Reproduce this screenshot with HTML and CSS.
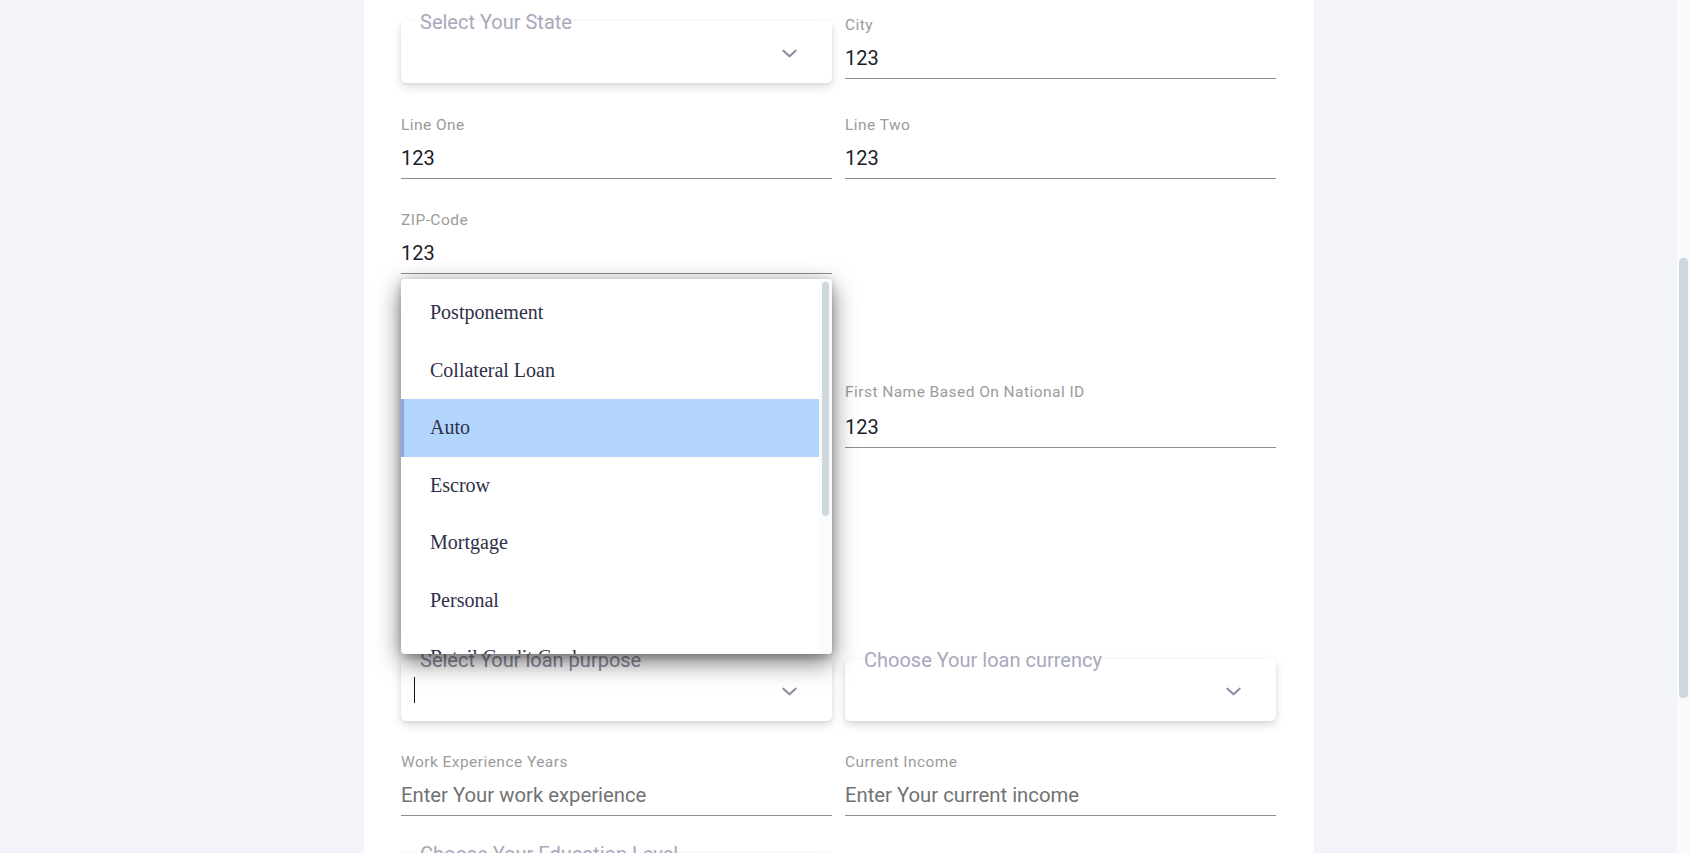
FILE: index.html
```html
<!DOCTYPE html>
<html lang="en">
<head>
<meta charset="utf-8">
<title>Loan application</title>
<link rel="stylesheet" href="styles.css">
</head>
<body>
<div class="app">
  <main class="page">
    <section class="card">
      <div class="row">
        <div class="select-cell">
          <div class="select">
            <span class="select-label">Select Your State</span>
            <svg class="chevron" viewBox="0 0 16 9" width="15" height="9"><path d="M1.5 1.5 L8 7.5 L14.5 1.5"/></svg>
          </div>
        </div>
        <div class="field">
          <div class="field-label">City</div>
          <div class="field-input">123</div>
        </div>
      </div>

      <div class="row">
        <div class="field">
          <div class="field-label">Line One</div>
          <div class="field-input">123</div>
        </div>
        <div class="field">
          <div class="field-label">Line Two</div>
          <div class="field-input">123</div>
        </div>
      </div>

      <div class="row">
        <div class="field">
          <div class="field-label">ZIP-Code</div>
          <div class="field-input">123</div>
        </div>
        <div></div>
      </div>

      <div class="row row-spaced">
        <div></div>
        <div class="field field-loose">
          <div class="field-label">First Name Based On National ID</div>
          <div class="field-input">123</div>
        </div>
      </div>

      <div class="row row-loan">
        <div class="select-cell">
          <div class="select">
            <div class="menu">
              <ul class="menu-list">
                <li class="menu-item">Postponement</li>
                <li class="menu-item">Collateral Loan</li>
                <li class="menu-item active">Auto</li>
                <li class="menu-item">Escrow</li>
                <li class="menu-item">Mortgage</li>
                <li class="menu-item">Personal</li>
                <li class="menu-item">Retail Credit Card</li>
                <li class="menu-item">Student</li>
              </ul>
              <div class="menu-track"><div class="menu-thumb"></div></div>
            </div>
            <span class="select-label select-label-focus">Select Your loan purpose</span>
            <span class="caret"></span>
            <svg class="chevron" viewBox="0 0 16 9" width="15" height="9"><path d="M1.5 1.5 L8 7.5 L14.5 1.5"/></svg>
          </div>
        </div>
        <div class="select-cell">
          <div class="select">
            <span class="select-label">Choose Your loan currency</span>
            <svg class="chevron" viewBox="0 0 16 9" width="15" height="9"><path d="M1.5 1.5 L8 7.5 L14.5 1.5"/></svg>
          </div>
        </div>
      </div>

      <div class="row">
        <div class="field">
          <div class="field-label">Work Experience Years</div>
          <div class="field-input placeholder">Enter Your work experience</div>
        </div>
        <div class="field">
          <div class="field-label">Current Income</div>
          <div class="field-input placeholder">Enter Your current income</div>
        </div>
      </div>

      <div class="row">
        <div class="select-cell">
          <div class="select">
            <span class="select-label">Choose Your Education Level</span>
            <svg class="chevron" viewBox="0 0 16 9" width="15" height="9"><path d="M1.5 1.5 L8 7.5 L14.5 1.5"/></svg>
          </div>
        </div>
        <div></div>
      </div>
    </section>
  </main>
  <div class="scrollbar"><div class="scrollbar-thumb"></div></div>
</div>
</body>
</html>
```
FILE: styles.css
```css
* { box-sizing: border-box; }

html, body {
  margin: 0;
  padding: 0;
  height: 853px;
  overflow: hidden;
}

body {
  background: #f2f4f9;
  font-family: Roboto, "Liberation Sans", sans-serif;
}

.app {
  display: flex;
  height: 853px;
}

.page {
  flex: 1;
  display: flex;
  justify-content: center;
  overflow: hidden;
}

.card {
  width: 950px;
  background: #ffffff;
  padding: 16px 37.5px 0;
  overflow: hidden;
}

.row {
  display: grid;
  grid-template-columns: 1fr 1fr;
  column-gap: 13px;
  align-items: start;
}

.row-spaced { margin-top: 77px; }
.row-loan { margin-top: 174px; }

/* text fields */
.field {
  margin-bottom: 32px;
}

.field-label {
  font-size: 15.5px;
  line-height: 18px;
  letter-spacing: 0.45px;
  color: #9b9b9b;
}

.field-input {
  margin-top: 12px;
  font-size: 20px;
  line-height: 24px;
  color: #1c1c2a;
  padding-bottom: 8px;
  border-bottom: 1px solid #8e8e8e;
}

.field-loose .field-input {
  margin-top: 14px;
}

.field-input.placeholder {
  font-size: 20.3px;
  color: #727272;
}

/* select boxes */
.select-cell {
  padding-top: 5px;
  margin-bottom: 33px;
}

.row-loan .select-cell {
  margin-bottom: 32px;
}

.select {
  position: relative;
  height: 62px;
  background: #ffffff;
  border-radius: 5px;
  box-shadow: 0 4px 10px rgba(0, 0, 0, 0.14), 0 1px 3px rgba(0, 0, 0, 0.06);
  display: flex;
  align-items: center;
  padding: 0 35px 0 13px;
}

.select-label {
  position: absolute;
  left: 19px;
  top: -11px;
  font-size: 20px;
  line-height: 24px;
  color: #a8a8bb;
  white-space: nowrap;
  z-index: 2;
}

.select-label-focus {
  color: #8c8c9e;
  z-index: 0;
}

.caret {
  width: 1px;
  height: 26px;
  background: #111111;
}

.chevron {
  margin-left: auto;
  margin-top: 2px;
  fill: none;
  stroke: #8d8da4;
  stroke-width: 2.3;
  stroke-linecap: round;
  stroke-linejoin: round;
}

/* dropdown menu */
.menu {
  position: absolute;
  left: 0;
  right: 0;
  bottom: calc(100% + 5px);
  height: 375px;
  display: flex;
  background: #ffffff;
  border-radius: 4px;
  overflow: hidden;
  box-shadow: 0 8px 24px rgba(0, 0, 0, 0.55), 0 2px 8px rgba(0, 0, 0, 0.2);
  z-index: 5;
}

.menu-list {
  flex: 1;
  list-style: none;
  margin: 0;
  padding: 5px 0 0;
  overflow: hidden;
}

.menu-item {
  height: 57.5px;
  display: flex;
  align-items: center;
  padding-left: 26px;
  border-left: 3px solid transparent;
  font-family: "Liberation Serif", "Times New Roman", serif;
  font-size: 20px;
  color: #2f2f48;
}

.menu-item.active {
  background: #b3d4fc;
  border-left-color: #8ea7e3;
}

.menu-track {
  width: 13px;
  background: #fafbfc;
  padding: 3px 3px 0 3px;
}

.menu-thumb {
  width: 7px;
  height: 234px;
  background: #cfd8dc;
  border-radius: 3px;
}

/* page scrollbar */
.scrollbar {
  width: 13px;
  background: #f9fafb;
  padding: 258px 2px 0;
}

.scrollbar-thumb {
  height: 440px;
  background: #cfd8dc;
  border-radius: 4px;
}
```
